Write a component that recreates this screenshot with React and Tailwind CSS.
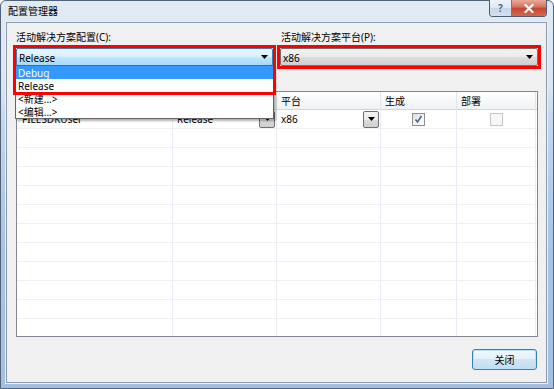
import React from "react";

function Arrow({ className = "" }) {
  return (
    <svg width="7" height="4" viewBox="0 0 7 4" className={className}>
      <path d="M0 0H7L3.5 4Z" fill="#000" />
    </svg>
  );
}

function CellDrop() {
  return (
    <div className="w-[16px] h-[17px] border border-[#707070] rounded-[2px] bg-[linear-gradient(180deg,#f4f4f4_0%,#ececec_50%,#dcdcdc_50%,#cfcfcf_100%)] flex items-center justify-center">
      <Arrow />
    </div>
  );
}

export default function App() {
  const rows = Array.from({ length: 11 });
  return (
    <div className="w-[554px] h-[389px] bg-white font-['Noto_Sans','Noto_Sans_CJK_SC',sans-serif] text-[10px] text-black">
      <div className="w-[554px] h-[389px] flex flex-col border border-[#52627a] rounded-t-[6px] bg-[linear-gradient(180deg,#e2eaf3_0%,#dbe5f1_22%,#c3d6ec_32%,#a9c5e7_60%,#a3c0e4_100%)]">
        {/* title bar */}
        <div className="h-[21px] flex items-start justify-between pl-[7px] pr-[6px]">
          <span className="mt-[3px] leading-[14px]">配置管理器</span>
          <div className="flex -mt-px border border-[#4e5d72] border-t-0 rounded-b-[4px] overflow-hidden h-[17px]">
            <div className="w-[22px] h-full border-r border-[#6b7a8f] bg-[linear-gradient(180deg,#eef3f9_0%,#dfe7f1_50%,#c9d6e6_50%,#d4e0ee_100%)] flex items-center justify-center text-[#5b6a80] font-bold leading-none text-[10px]">
              ?
            </div>
            <div className="w-[34px] h-full bg-[linear-gradient(180deg,#e9a99a_0%,#d7705f_45%,#c7462f_50%,#d0684e_100%)] flex items-center justify-center">
              <svg width="10" height="9" viewBox="0 0 10 9">
                <path d="M1.5 1L8.5 8M8.5 1L1.5 8" stroke="#fff" strokeWidth="2.2" strokeLinecap="square" />
              </svg>
            </div>
          </div>
        </div>

        {/* client */}
        <div className="ml-[5px] mr-[6px] mb-[5px] flex-1 flex flex-col border border-[#8a9bb2] bg-[#f0f0f0] shadow-[0_0_0_1px_#e8eff7]">
          {/* top selectors */}
          <div className="pl-[6px] pt-[7px] grid grid-cols-[263px_264px] gap-x-px">
            <div className="flex flex-col">
              <span className="pl-[3px] leading-[14px]">活动解决方案配置(C):</span>
              <div className="relative mt-[1px] h-[24px] p-[3px]">
                <div className="h-[18px] border border-[#3c7fb1] rounded-[2px] bg-[linear-gradient(180deg,#eaf6fd_0%,#d9f0fc_45%,#bee6fd_55%,#a7d9f5_100%)] flex items-center justify-between pl-[2px] pr-[4px]">
                  <span className="leading-[14px] mt-px">Release</span>
                  <Arrow />
                </div>
                {/* dropdown list */}
                <div className="absolute left-[2px] top-[20px] w-[259px] z-10 bg-white border border-[#646464] shadow-[2px_2px_2px_rgba(0,0,0,0.3)] flex flex-col">
                  <div className="h-[13px] bg-[#3399ff] text-white pl-[2px] pt-[1px] leading-[13px]">Debug</div>
                  <div className="h-[13px] pl-[2px] pt-[1px] leading-[13px]">Release</div>
                  <div className="h-[13px] pl-[2px] pt-[1px] leading-[13px]">&lt;新建...&gt;</div>
                  <div className="h-[13px] pl-[2px] pt-[1px] leading-[13px]">&lt;编辑...&gt;</div>
                </div>
                {/* red annotation */}
                <div className="absolute left-0 top-0 w-[263px] h-[50px] border-[3px] border-[#ff0000] z-20 pointer-events-none" />
              </div>
            </div>
            <div className="flex flex-col">
              <span className="pl-[4px] leading-[14px]">活动解决方案平台(P):</span>
              <div className="mt-[1px] h-[24px] border-[3px] border-[#ff0000]">
                <div className="h-[18px] border border-[#707070] rounded-[2px] bg-[linear-gradient(180deg,#f2f2f2_0%,#ebebeb_50%,#dddddd_50%,#cfcfcf_100%)] flex items-center justify-between pl-[2px] pr-[4px]">
                  <span className="leading-[14px] mt-px">x86</span>
                  <Arrow />
                </div>
              </div>
            </div>
          </div>

          {/* grid */}
          <div className="ml-[9px] mt-[22px] w-[522px] h-[246px] border border-[#828790] bg-white overflow-hidden">
            <div className="h-[18px] grid grid-cols-[156px_104px_104px_76px_79px] border-b border-[#d5d5d5] bg-[linear-gradient(180deg,#ffffff_0%,#f7f8fa_50%,#f1f2f4_100%)]">
              <div className="border-r border-[#e3e5e8]" />
              <div className="border-r border-[#e3e5e8]" />
              <div className="border-r border-[#e3e5e8] pl-[4px] leading-[18px]">平台</div>
              <div className="border-r border-[#e3e5e8] pl-[4px] leading-[18px]">生成</div>
              <div className="border-r border-[#e3e5e8] pl-[4px] leading-[18px]">部署</div>
            </div>
            <div className="h-[19px] grid grid-cols-[156px_104px_104px_76px_79px] border-b border-[#f0f0f0]">
              <div className="border-r border-[#e6edf6] pl-[5px] pt-[1px] flex items-center">FILESDKUser</div>
              <div className="border-r border-[#e6edf6] pl-[4px] pr-[1px] flex items-center justify-between">
                <span className="mt-[1px]">Release</span>
                <CellDrop />
              </div>
              <div className="border-r border-[#e6edf6] pl-[4px] pr-[1px] flex items-center justify-between">
                <span className="mt-[1px]">x86</span>
                <CellDrop />
              </div>
              <div className="border-r border-[#e6edf6] flex items-center justify-center">
                <div className="w-[13px] h-[13px] border border-[#8f8f8f] bg-[linear-gradient(135deg,#dcdcdc_0%,#f4f4f4_60%,#ffffff_100%)] flex items-center justify-center">
                  <svg width="9" height="9" viewBox="0 0 9 9">
                    <path d="M1.5 4.5L3.5 7L7.5 1" stroke="#4a5f97" strokeWidth="1.5" fill="none" />
                  </svg>
                </div>
              </div>
              <div className="border-r border-[#e6edf6] flex items-center justify-center">
                <div className="w-[13px] h-[13px] border border-[#c6c6c6] bg-[#f7f7f7]" />
              </div>
            </div>
            {rows.map((_, i) => (
              <div
                key={i}
                className="h-[19px] grid grid-cols-[156px_104px_104px_76px_79px] border-b border-[#f0f0f0]"
              >
                <div className="border-r border-[#e6edf6]" />
                <div className="border-r border-[#e6edf6]" />
                <div className="border-r border-[#e6edf6]" />
                <div className="border-r border-[#e6edf6]" />
                <div className="border-r border-[#e6edf6]" />
              </div>
            ))}
          </div>

          {/* bottom button */}
          <div className="flex justify-end pr-[9px] mt-[12px]">
            <button className="w-[65px] h-[21px] border border-[#3c7fb1] rounded-[3px] bg-[linear-gradient(180deg,#f2f8fd_0%,#e3f0fa_50%,#cfe6f6_50%,#c2ddf1_100%)] shadow-[inset_0_0_0_1px_#b7e2fb] flex items-center justify-center leading-none">
              关闭
            </button>
          </div>
        </div>
      </div>
    </div>
  );
}
